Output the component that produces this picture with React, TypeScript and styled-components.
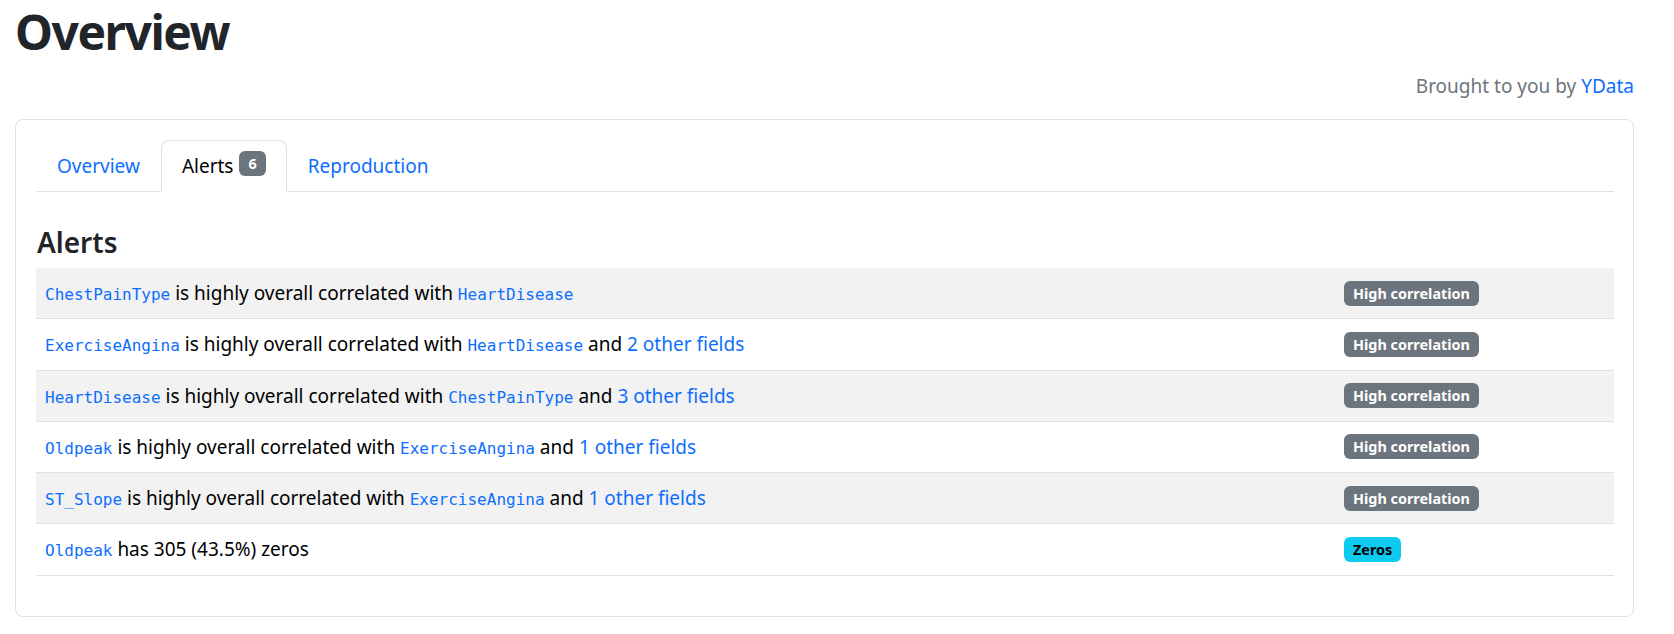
import React from "react";
import styled, { createGlobalStyle } from "styled-components";

const Global = createGlobalStyle`
  html, body { margin: 0; padding: 0; background: #fff; }
  body {
    font-family: "Noto Sans", "Open Sans", sans-serif;
    font-size: 19px;
    line-height: 30px;
    color: #212529;
  }
  * { box-sizing: border-box; }
`;

const Page = styled.div`
  padding: 0 40px 0 15px;
`;

const Title = styled.h1`
  margin: 0;
  padding-top: 1px;
  font-size: 48px;
  font-weight: 700;
  line-height: 62px;
  letter-spacing: -1.5px;
`;

const Credit = styled.p`
  margin: 8px 0 18px;
  text-align: right;
  color: #6c757d;
  line-height: 30px;
`;

const Link = styled.a`
  color: #0d6efd;
  text-decoration: none;
`;

const Card = styled.div`
  border: 1px solid #dfdfdf;
  border-radius: 8px;
  padding: 20px 19px 20px 20px;
`;

const Tabs = styled.ul`
  display: flex;
  list-style: none;
  margin: 0;
  padding: 0;
  border-bottom: 1px solid #dee2e6;
`;

const Tab = styled.li<{ $active?: boolean }>`
  margin-bottom: -1px;
  padding: 10px 20px;
  line-height: 30px;
  display: flex;
  align-items: center;
  gap: 6px;
  border: 1px solid ${(p) => (p.$active ? "#dee2e6" : "transparent")};
  border-bottom-color: ${(p) => (p.$active ? "#fff" : "transparent")};
  border-radius: 8px 8px 0 0;
  background: ${(p) => (p.$active ? "#fff" : "transparent")};
  color: ${(p) => (p.$active ? "#000" : "#0d6efd")};
`;

const CountBadge = styled.span`
  display: inline-block;
  background: #6c757d;
  color: #fff;
  font-size: 14.4px;
  font-weight: 700;
  line-height: 15px;
  padding: 5px 9px;
  border-radius: 6px;
  margin-top: -6px;
`;

const SectionTitle = styled.h4`
  margin: 32px 0 8px 1px;
  font-size: 28px;
  font-weight: 600;
  line-height: 36px;
`;

const Table = styled.div`
  margin-bottom: 20px;
`;

const Row = styled.div<{ $striped?: boolean }>`
  display: grid;
  grid-template-columns: 1fr 278px;
  border-bottom: 1px solid #dee2e6;
  background: ${(p) => (p.$striped ? "#f2f2f2" : "transparent")};
`;

const Cell = styled.div`
  padding: 10px 9px;
  height: 50.25px;
  line-height: 30px;
  color: #000;
  white-space: nowrap;
`;

const BadgeCell = styled.div`
  padding: 0 8px;
  height: 50.25px;
  display: flex;
  align-items: center;
`;

const Code = styled.code`
  font-family: "DejaVu Sans Mono", "Liberation Mono", monospace;
  font-size: 16px;
  line-height: 1;
  color: #0d6efd;
`;

const Badge = styled.span<{ $kind: "secondary" | "info" }>`
  display: inline-block;
  font-size: 14.4px;
  font-weight: 700;
  line-height: 15px;
  padding: 5px 9px;
  border-radius: 6px;
  background: ${(p) => (p.$kind === "info" ? "#0dcaf0" : "#6c757d")};
  color: ${(p) => (p.$kind === "info" ? "#000" : "#fff")};
`;

type Alert = {
  a: string;
  text: string;
  b?: string;
  more?: string;
  badge: string;
  kind: "secondary" | "info";
};

const alerts: Alert[] = [
  { a: "ChestPainType", text: " is highly overall correlated with ", b: "HeartDisease", badge: "High correlation", kind: "secondary" },
  { a: "ExerciseAngina", text: " is highly overall correlated with ", b: "HeartDisease", more: "2 other fields", badge: "High correlation", kind: "secondary" },
  { a: "HeartDisease", text: " is highly overall correlated with ", b: "ChestPainType", more: "3 other fields", badge: "High correlation", kind: "secondary" },
  { a: "Oldpeak", text: " is highly overall correlated with ", b: "ExerciseAngina", more: "1 other fields", badge: "High correlation", kind: "secondary" },
  { a: "ST_Slope", text: " is highly overall correlated with ", b: "ExerciseAngina", more: "1 other fields", badge: "High correlation", kind: "secondary" },
  { a: "Oldpeak", text: " has 305 (43.5%) zeros", badge: "Zeros", kind: "info" },
];

export default function App() {
  return (
    <Page>
      <Global />
      <Title>Overview</Title>
      <Credit>
        Brought to you by <Link href="#">YData</Link>
      </Credit>
      <Card>
        <Tabs>
          <Tab>Overview</Tab>
          <Tab $active>
            Alerts <CountBadge>6</CountBadge>
          </Tab>
          <Tab>Reproduction</Tab>
        </Tabs>
        <SectionTitle>Alerts</SectionTitle>
        <Table>
          {alerts.map((r, i) => (
            <Row key={i} $striped={i % 2 === 0}>
              <Cell>
                <Code>{r.a}</Code>
                {r.text}
                {r.b && <Code>{r.b}</Code>}
                {r.more && (
                  <>
                    {" and "}
                    <Link href="#">{r.more}</Link>
                  </>
                )}
              </Cell>
              <BadgeCell>
                <Badge $kind={r.kind}>{r.badge}</Badge>
              </BadgeCell>
            </Row>
          ))}
        </Table>
      </Card>
    </Page>
  );
}
